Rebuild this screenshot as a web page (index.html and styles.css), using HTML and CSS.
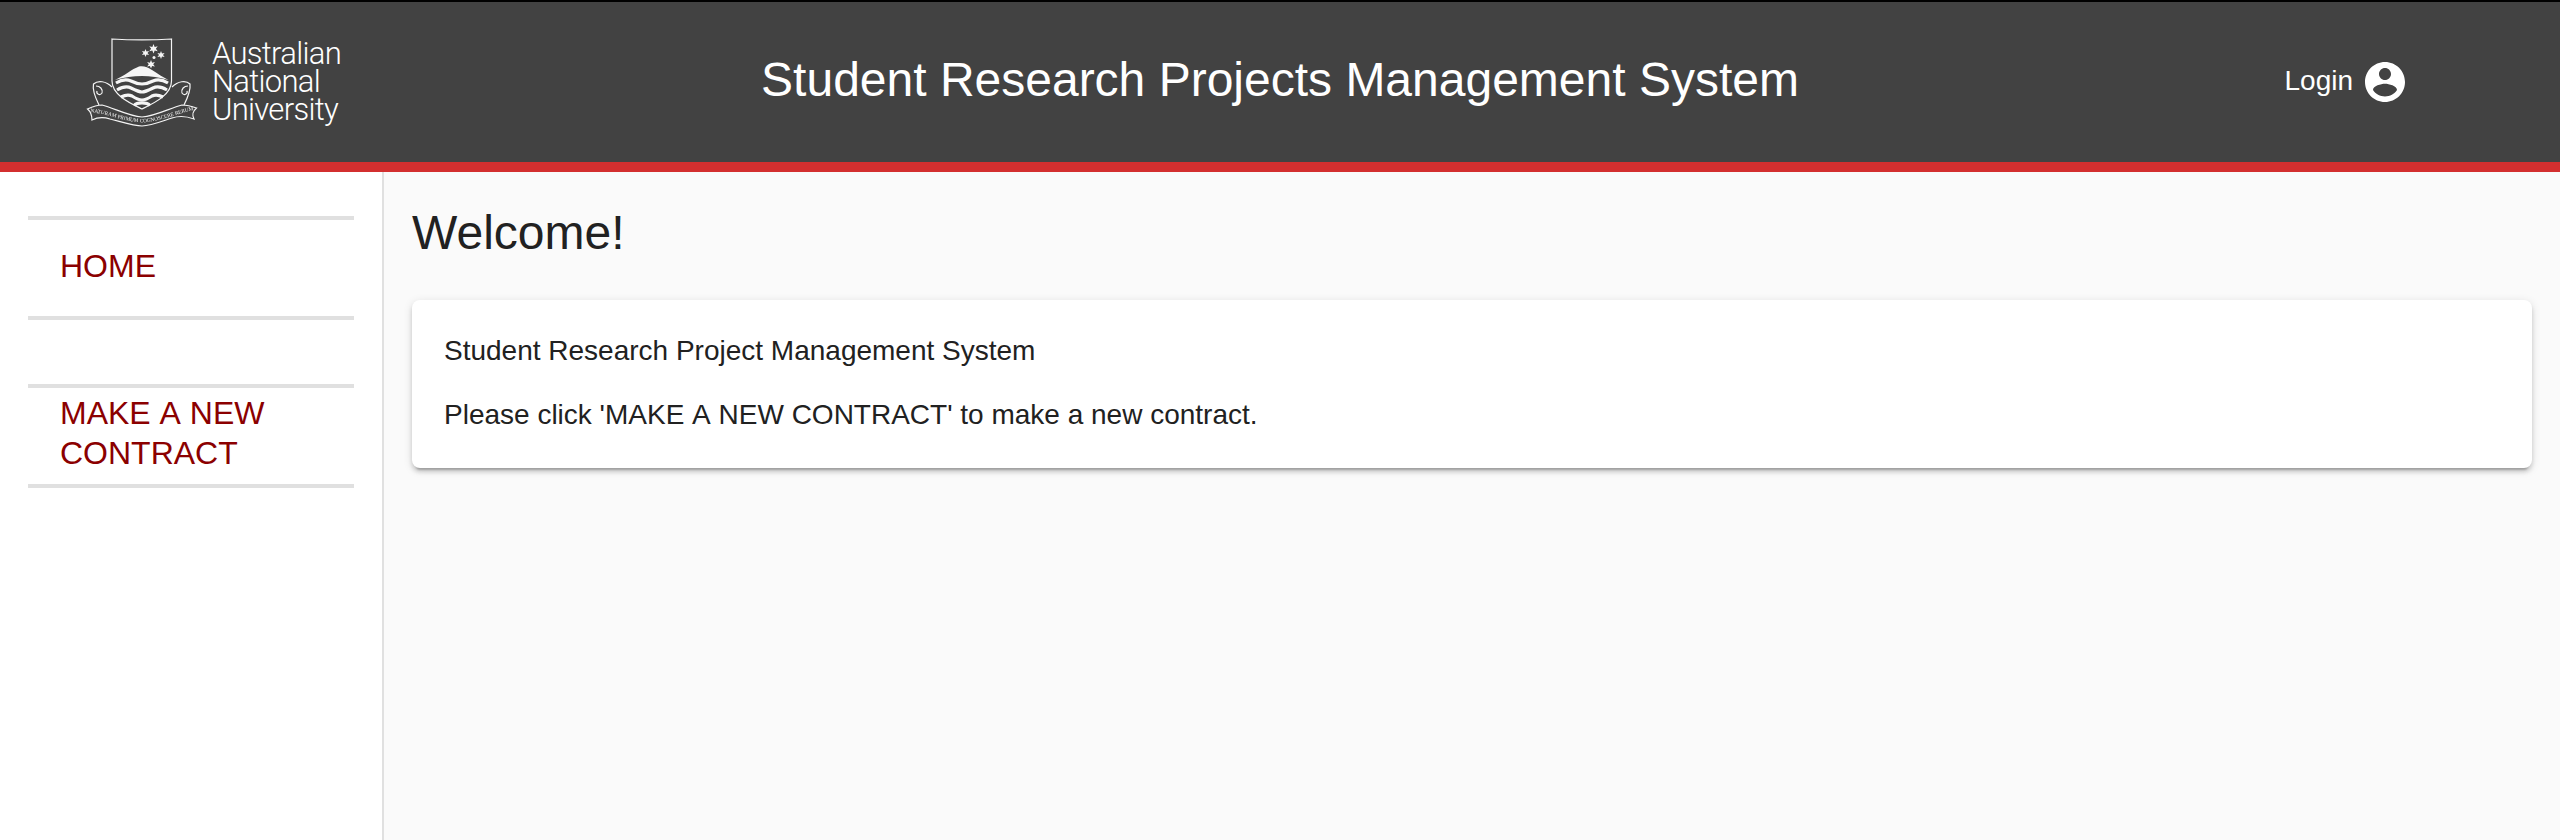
FILE: index.html
```html
<!DOCTYPE html>
<html>
<head>
	<link rel="stylesheet" href="styles.css">
	<title>Student Research Projects Management System</title>
</head>
<body>
	<header class="top">
		<div class="brand">
			<svg class="crest" viewBox="86 36 112 91" width="112" height="91">
				<defs>
					<path id="motto" d="M91 111 C108 113 124 120.500 142 121.500 C160 120.500 176 113 193 109"/>
				</defs>
				<path class="line" d="M112 38 C130 39 154 39 171.500 38 L171.500 80 C171.500 94 154 102 142 108 C130 102 112 94 112 80 Z"/>
				<g class="fill">
					<path d="M153.500 43 l1.200 3 3 -.8 -1.800 2.500 1.800 2.500 -3 -.8 -1.200 3 -1.200 -3 -3 .8 1.800 -2.500 -1.800 -2.500 3 .8 Z"/>
					<path d="M145.500 48 l1 2.500 2.600 -.6 -1.600 2.100 1.600 2.100 -2.600 -.6 -1 2.500 -1 -2.500 -2.600 .6 1.600 -2.100 -1.600 -2.100 2.600 .6 Z"/>
					<path d="M161 50 l1 2.500 2.600 -.6 -1.600 2.100 1.600 2.100 -2.600 -.6 -1 2.500 -1 -2.500 -2.600 .6 1.600 -2.100 -1.600 -2.100 2.600 .6 Z"/>
					<path d="M151 59 l1.100 2.700 2.800 -.7 -1.700 2.300 1.700 2.300 -2.800 -.7 -1.100 2.700 -1.100 -2.700 -2.800 .7 1.700 -2.300 -1.700 -2.300 2.800 .7 Z"/>
					<circle cx="154" cy="56.500" r="1.500"/>
					<path d="M115 79 C124 75 132 68 139 65.500 C143 64.500 148 66 152 69 C158 73 163 76 168.500 79 C160 76.500 150 75 142 75 C133 75 124 76.500 115 79 Z"/>
				</g>
				<g class="wave">
					<path d="M116 82 C121 79 126 78 131 80 C135 82 139 83 142 83 C145 83 149 82 153 80 C158 78 163 79 168 82"/>
					<path d="M117 89 C122 86 127 85 131 87 C135 89 139 91 142 91 C145 91 149 89 153 87 C157 85 162 86 167 89"/>
					<path d="M121 96 C125 94 128 93 132 95 C135 97 139 99 142 99 C145 99 149 97 152 95 C156 93 159 94 163 96"/>
					<path d="M134 104.500 C137 101 147 101 150 104.500"/>
				</g>
				<g class="line">
					<path d="M112 86 C106 80 98 79 93.500 83 C92 90 96 98 99 104"/>
					<path d="M172 86 C178 80 186 79 190 83 C191 90 187 98 184 104"/>
					<path d="M96 85 C100 85 103 88 102 92 C100 95 96 93 97 90"/>
					<path d="M188 85 C184 85 181 88 182 92 C184 95 188 93 187 90"/>
					<path d="M87.500 108 C94 105 98 104 102 104 C114 107 128 115 142 116 C156 115 170 107 182 104 C186 104 191 105 196.500 107 C192 111 192 114 194 118 C186 115 178 115 172 117 C160 121 150 125 142 125 C134 125 122 121 110 118 C104 116 98 116 92 119 C92 114 91 111 87.500 108 Z"/>
				</g>
				<text class="motto"><textPath href="#motto" startOffset="50%" text-anchor="middle">NATURAM PRIMUM COGNOSCERE RERUM</textPath></text>
			</svg>
			<div class="brand-name">Australian<br>National<br>University</div>
		</div>
		<h1 class="title">Student Research Projects Management System</h1>
		<div class="login">
			<span class="login-text">Login</span>
			<svg class="user" viewBox="0 0 24 24" width="48" height="48">
				<path d="M12 2C6.480 2 2 6.480 2 12s4.480 10 10 10 10-4.480 10-10S17.520 2 12 2zm0 3c1.660 0 3 1.340 3 3s-1.340 3-3 3-3-1.340-3-3 1.340-3 3-3zm0 14.200c-2.500 0-4.710-1.280-6-3.220.030-1.990 4-3.080 6-3.080 1.990 0 5.970 1.090 6 3.080-1.290 1.940-3.500 3.220-6 3.220z"/>
			</svg>
		</div>
	</header>
	<div class="page">
		<nav class="side">
			<a class="item" href="#">HOME</a>
			<a class="item item-tall" href="#">MAKE A NEW CONTRACT</a>
		</nav>
		<main class="content">
			<h2 class="welcome">Welcome!</h2>
			<div class="card">
				<p>Student Research Project Management System</p>
				<p>Please click 'MAKE A NEW CONTRACT' to make a new contract.</p>
			</div>
		</main>
	</div>
</body>
</html>
```

FILE: styles.css
```css
html {
	height: 100%
}

body {
	margin: 0;
	height: 100%;
	display: flex;
	flex-direction: column;
	font-family: "Liberation Sans", Arial, sans-serif;
	background-color: #fafafa;
	color: #212121
}

.top {
	flex: none;
	height: 160px;
	display: grid;
	grid-template-columns: 1fr auto 1fr;
	align-items: center;
	background-color: #424242;
	border-top: 2px solid #000;
	border-bottom: 10px solid #d32f2f;
	color: #fff
}

.brand {
	display: flex;
	align-items: center;
	padding-left: 86px;
	gap: 14px
}

.crest {
	display: block;
	filter: blur(0.3px)
}

.crest .line,
.crest .line * {
	fill: none;
	stroke: #f5f5f5;
	stroke-width: 1.200
}

.crest .fill {
	fill: #f5f5f5
}

.crest .wave {
	fill: none;
	stroke: #f5f5f5;
	stroke-width: 3.200
}

.crest .motto {
	font-family: "Liberation Serif", serif;
	font-size: 5.300px;
	fill: #f5f5f5
}

.brand-name {
	font-family: Roboto, sans-serif;
	font-weight: 300;
	font-size: 31px;
	line-height: 28px;
	letter-spacing: -0.7px
}

.title {
	margin: 0 0 5px;
	font-size: 48px;
	font-weight: 400;
	line-height: 56px
}

.login {
	display: flex;
	align-items: center;
	justify-content: flex-end;
	gap: 8px;
	padding-right: 151px;
	font-size: 28px
}

.login-text {
	padding-bottom: 3px
}

.user {
	display: block;
	fill: #fff
}

.page {
	flex: 1;
	display: flex;
	min-height: 0
}

.side {
	flex: none;
	box-sizing: border-box;
	width: 384px;
	padding: 44px 28px 0;
	background-color: #fff;
	border-right: 2px solid #e0e0e0;
	display: flex;
	flex-direction: column;
	gap: 64px
}

.item {
	display: block;
	padding: 26px 32px 30px;
	border-top: 4px solid #e0e0e0;
	border-bottom: 4px solid #e0e0e0;
	font-size: 32px;
	line-height: 40px;
	font-kerning: none;
	color: #8b0000;
	text-decoration: none
}

.item-tall {
	padding-top: 5px;
	padding-bottom: 11px
}

.content {
	flex: 1;
	padding: 0 28px
}

.welcome {
	margin: 34px 0 40px;
	font-size: 48px;
	font-weight: 400;
	line-height: 54px
}

.card {
	padding: 35px 32px 21px;
	background-color: #fff;
	border-radius: 8px;
	box-shadow: 0 6px 2px -4px rgba(0,0,0,.2), 0 4px 4px rgba(0,0,0,.14), 0 2px 10px rgba(0,0,0,.12);
	font-size: 28px;
	line-height: 32px;
	font-kerning: none
}

.card p {
	margin: 0 0 32px
}

.card p:last-child {
	margin-bottom: 16px
}
```
